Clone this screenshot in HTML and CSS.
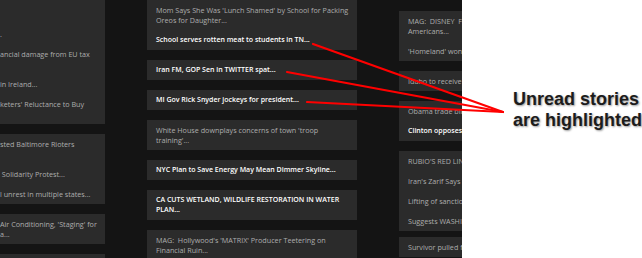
FILE: index.html
```html
<!DOCTYPE html>
<html lang="en">
<head>
  <meta charset="UTF-8">
  <meta name="viewport" content="width=device-width, initial-scale=1.0">
  <title>News Reader - Unread Stories</title>
  <link rel="stylesheet" href="styles.css">
</head>
<body>
  <div class="reader">
    <div class="column column-cut">
      <div class="card">
        <div class="story">&nbsp;</div>
        <div class="story">&nbsp;<br>.</div>
        <div class="story">ancial damage from EU tax<br>&nbsp;</div>
        <div class="story">in Ireland...</div>
        <div class="story">keters' Reluctance to Buy<br>&nbsp;</div>
      </div>
      <div class="card">
        <div class="story">sted Baltimore Rioters<br>&nbsp;</div>
        <div class="story">&nbsp;Solidarity Protest...</div>
        <div class="story">l unrest in multiple states...</div>
      </div>
      <div class="card">
        <div class="story">Air Conditioning, 'Staging' for<br>a...</div>
      </div>
      <div class="card">
        <div class="story">&nbsp;</div>
      </div>
    </div>

    <div class="column">
      <div class="card">
        <div class="story">Mom Says She Was 'Lunch Shamed' by School for Packing Oreos for Daughter...</div>
        <div class="story unread">School serves rotten meat to students in TN...</div>
      </div>
      <div class="card">
        <div class="story unread">Iran FM, GOP Sen in TWITTER spat...</div>
      </div>
      <div class="card">
        <div class="story unread">MI Gov Rick Snyder jockeys for president...</div>
      </div>
      <div class="card">
        <div class="story">White House downplays concerns of town 'troop training'...</div>
      </div>
      <div class="card">
        <div class="story unread">NYC Plan to Save Energy May Mean Dimmer Skyline...</div>
      </div>
      <div class="card">
        <div class="story unread">CA CUTS WETLAND, WILDLIFE RESTORATION IN WATER PLAN...</div>
      </div>
      <div class="card">
        <div class="story">MAG:&nbsp; Hollywood's 'MATRIX' Producer Teetering on Financial Ruin...</div>
      </div>
    </div>

    <div class="column column-right">
      <div class="card">
        <div class="story">MAG:&nbsp; DISNEY&nbsp; Faces Backlash From Conservative Americans...</div>
        <div class="story">'Homeland' won big at Emmys...</div>
      </div>
      <div class="card">
        <div class="story">Idaho to receive federal drought aid...</div>
      </div>
      <div class="card">
        <div class="story">Obama trade bill stalls in Senate...</div>
        <div class="story unread">Clinton opposes pipeline...</div>
      </div>
      <div class="card">
        <div class="story">RUBIO'S RED LINE ON IRAN...</div>
        <div class="story">Iran's Zarif Says Deal Is Near...</div>
        <div class="story">Lifting of sanctions on table...</div>
        <div class="story">Suggests WASHINGTON...</div>
      </div>
      <div class="card card-tight">
        <div class="story">Survivor pulled from rubble...</div>
      </div>
    </div>
  </div>

  <div class="note">
    <p>Unread stories<br>are highlighted</p>
  </div>

  <svg class="arrows" width="642" height="258" viewBox="0 0 642 258">
    <g stroke="#f00" stroke-width="2.2" stroke-linecap="round">
      <line x1="313" y1="44" x2="503" y2="112"/>
      <line x1="287" y1="72" x2="503" y2="112"/>
      <line x1="307" y1="102" x2="503" y2="112"/>
    </g>
  </svg>
</body>
</html>
```

FILE: styles.css
```css
* {
  box-sizing: border-box;
}
body {
  margin: 0;
  width: 642px;
  height: 258px;
  overflow: hidden;
  display: flex;
  position: relative;
  background-color: #fff;
  font-family: "Open Sans", sans-serif;
}
.reader {
  width: 462px;
  height: 258px;
  display: flex;
  gap: 42px;
  overflow: hidden;
  background-color: #141414;
}
.column {
  flex: none;
  width: 210px;
  display: flex;
  flex-direction: column;
  gap: 10px;
}
.column-cut {
  width: 105px;
  margin-top: -6px;
}
.column-right {
  margin-top: 11px;
}
.card {
  background-color: #2b2b2b;
}
.card-tight {
  margin-top: -4px;
}
.story {
  padding: 5px 7px 5px 9px;
  font-size: 7.2px;
  line-height: 10px;
  color: #adadad;
}
.story.unread {
  color: #fff;
  font-size: 7px;
  font-weight: 600;
}
.column-cut .story {
  padding-left: 0;
  white-space: nowrap;
}
.column-right .story {
  white-space: nowrap;
}
.column-right .card:first-child .story:first-child {
  white-space: normal;
}
.note {
  flex: 1;
  padding: 89px 0 0 51px;
  font-family: "Liberation Sans", Arial, sans-serif;
  font-weight: bold;
  font-size: 18px;
  line-height: 21px;
  color: #1c1c1c;
  white-space: nowrap;
  text-shadow: 1px 1px 2px rgba(0, 0, 0, 0.4);
}
.note p {
  margin: 0;
}
.arrows {
  position: absolute;
  left: 0;
  top: 0;
  pointer-events: none;
}
```
